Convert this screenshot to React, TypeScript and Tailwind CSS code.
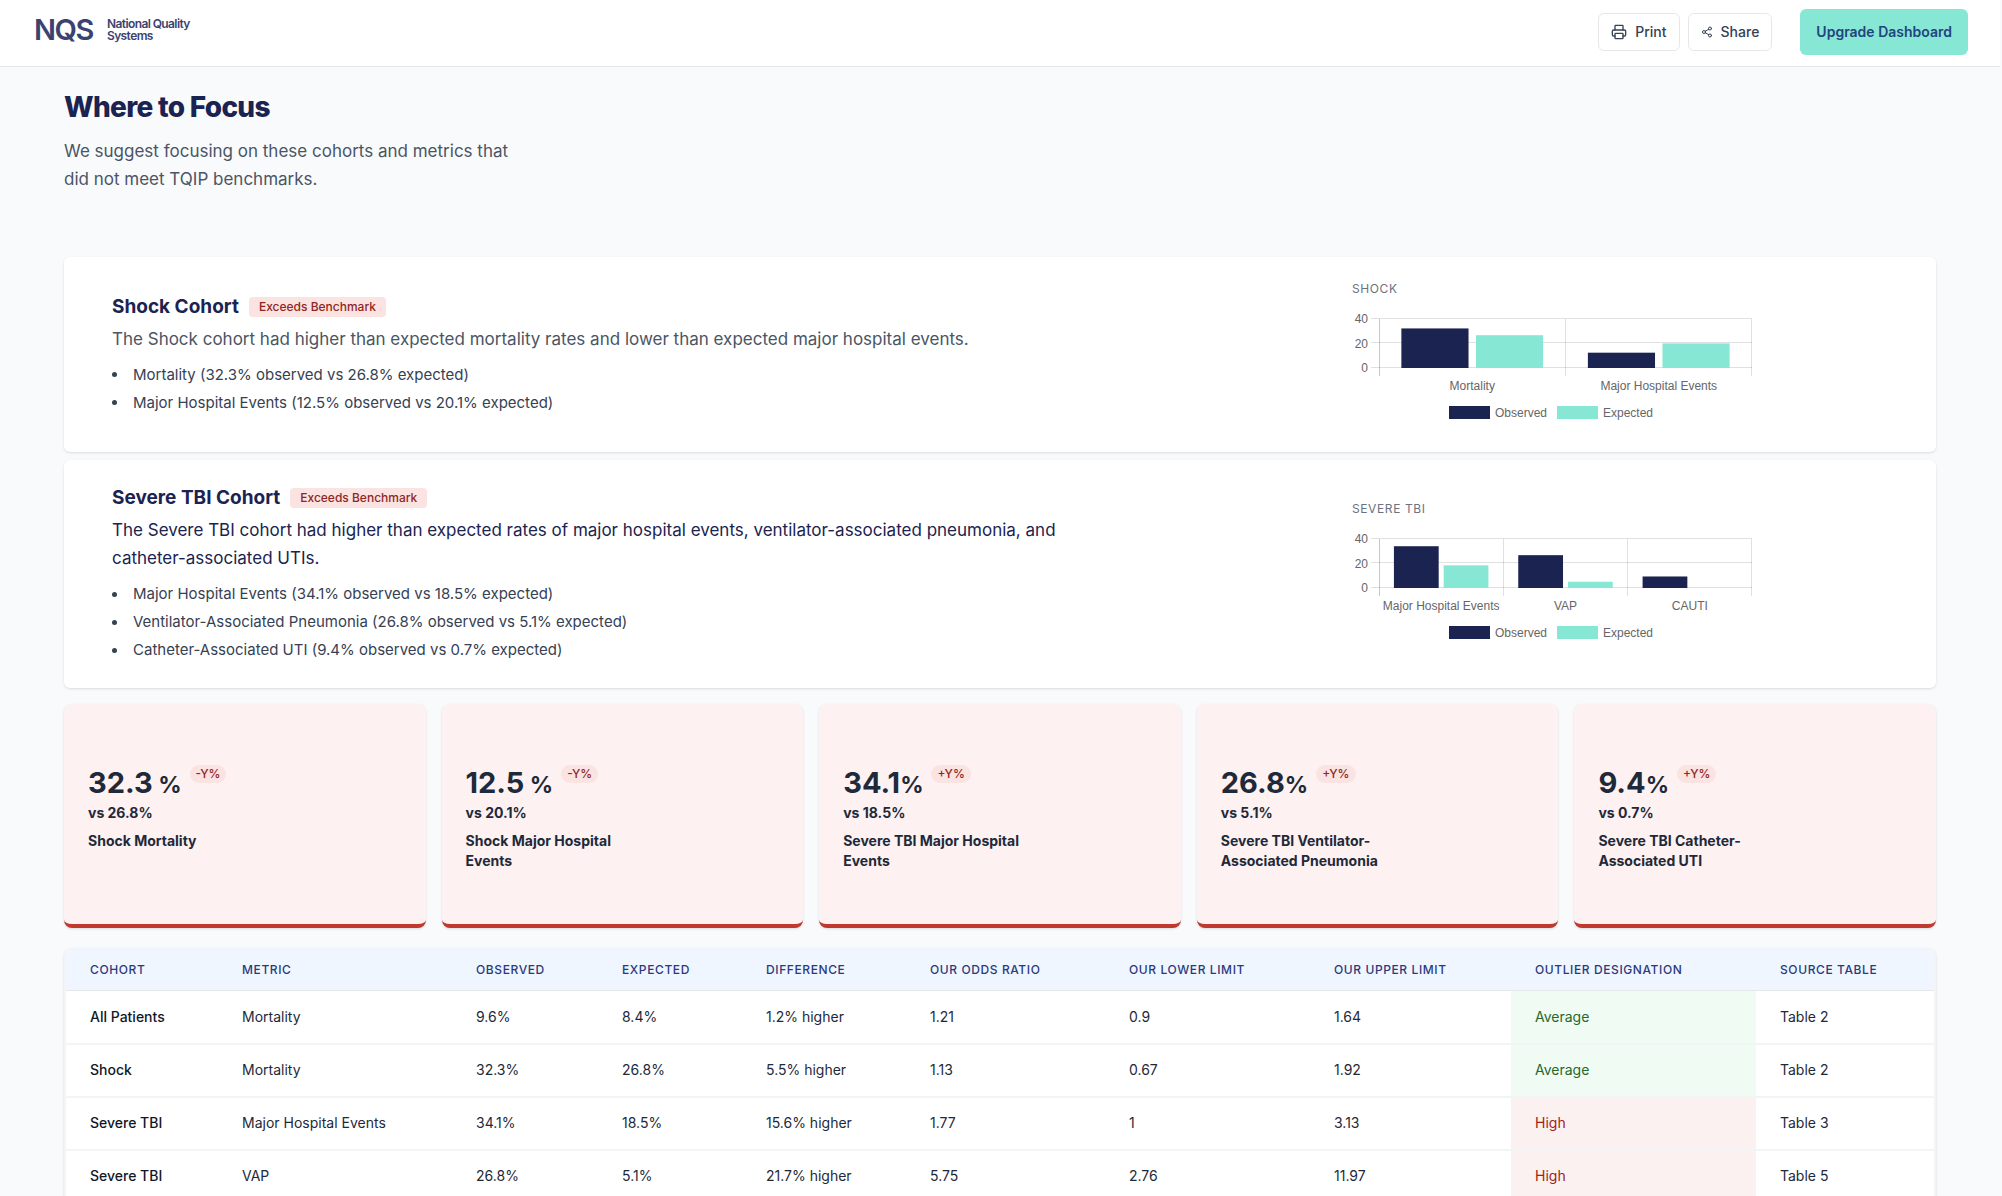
import React from 'react';
import { Printer, Share2 } from 'lucide-react';

interface ChartGroup {
  label: string;
  observed: number;
  expected: number;
}

interface CohortProps {
  title: string;
  summary: string;
  summaryClass: string;
  findings: string[];
  chartTitle: string;
  groups: ChartGroup[];
}

const cohorts: CohortProps[] = [
  {
    title: 'Shock Cohort',
    summary: 'The Shock cohort had higher than expected mortality rates and lower than expected major hospital events.',
    summaryClass: 'text-gray-600',
    findings: [
      'Mortality (32.3% observed vs 26.8% expected)',
      'Major Hospital Events (12.5% observed vs 20.1% expected)',
    ],
    chartTitle: 'Shock',
    groups: [
      { label: 'Mortality', observed: 32.3, expected: 26.8 },
      { label: 'Major Hospital Events', observed: 12.5, expected: 20.1 },
    ],
  },
  {
    title: 'Severe TBI Cohort',
    summary:
      'The Severe TBI cohort had higher than expected rates of major hospital events, ventilator-associated pneumonia, and catheter-associated UTIs.',
    summaryClass: 'text-[#1b2350]',
    findings: [
      'Major Hospital Events (34.1% observed vs 18.5% expected)',
      'Ventilator-Associated Pneumonia (26.8% observed vs 5.1% expected)',
      'Catheter-Associated UTI (9.4% observed vs 0.7% expected)',
    ],
    chartTitle: 'Severe TBI',
    groups: [
      { label: 'Major Hospital Events', observed: 34.1, expected: 18.5 },
      { label: 'VAP', observed: 26.8, expected: 5.1 },
      { label: 'CAUTI', observed: 9.4, expected: 0 },
    ],
  },
];

const metrics = [
  { value: '32.3', unit: ' %', badge: '-Y%', versus: 'vs 26.8%', label: 'Shock Mortality' },
  { value: '12.5', unit: ' %', badge: '-Y%', versus: 'vs 20.1%', label: 'Shock Major Hospital Events' },
  { value: '34.1', unit: '%', badge: '+Y%', versus: 'vs 18.5%', label: 'Severe TBI Major Hospital Events' },
  { value: '26.8', unit: '%', badge: '+Y%', versus: 'vs 5.1%', label: 'Severe TBI Ventilator-Associated Pneumonia' },
  { value: '9.4', unit: '%', badge: '+Y%', versus: 'vs 0.7%', label: 'Severe TBI Catheter-Associated UTI' },
];

const columns = [
  { name: 'Cohort', width: 'w-[152px]' },
  { name: 'Metric', width: 'w-[234px]' },
  { name: 'Observed', width: 'w-[146px]' },
  { name: 'Expected', width: 'w-[144px]' },
  { name: 'Difference', width: 'w-[164px]' },
  { name: 'Our Odds Ratio', width: 'w-[199px]' },
  { name: 'Our Lower Limit', width: 'w-[205px]' },
  { name: 'Our Upper Limit', width: 'w-[201px]' },
  { name: 'Outlier Designation', width: 'w-[245px]' },
  { name: 'Source Table', width: 'w-auto' },
];

const rows = [
  ['All Patients', 'Mortality', '9.6%', '8.4%', '1.2% higher', '1.21', '0.9', '1.64', 'Average', 'Table 2'],
  ['Shock', 'Mortality', '32.3%', '26.8%', '5.5% higher', '1.13', '0.67', '1.92', 'Average', 'Table 2'],
  ['Severe TBI', 'Major Hospital Events', '34.1%', '18.5%', '15.6% higher', '1.77', '1', '3.13', 'High', 'Table 3'],
  ['Severe TBI', 'VAP', '26.8%', '5.1%', '21.7% higher', '5.75', '2.76', '11.97', 'High', 'Table 5'],
];

const OBSERVED = '#1b2350';
const EXPECTED = '#86e8d4';

const BarChart: React.FC<{ groups: ChartGroup[] }> = ({ groups }) => {
  const left = 27;
  const right = 400;
  const top = 22;
  const base = 71;
  const slot = (right - left) / groups.length;
  const barSlot = (slot * 0.8) / 2;
  const barWidth = barSlot * 0.9;
  const y = (value: number) => base - (value / 40) * (base - top);

  return (
    <svg
      width="400"
      height="131"
      viewBox="0 0 400 131"
      role="img"
      aria-label="Observed and expected rates"
      fontFamily='"Liberation Sans", Arial, sans-serif'
      fontSize="12"
      fill="#666"
    >
      {[0, 20, 40].map((tick) => (
        <g key={tick}>
          <line x1={left - 8} x2={right} y1={Math.floor(y(tick)) - 0.5} y2={Math.floor(y(tick)) - 0.5} stroke="#000" strokeOpacity="0.12" />
          <text x={left - 11} y={y(tick) + 4} textAnchor="end">
            {tick}
          </text>
        </g>
      ))}
      {[...groups, null].map((_, i) => {
        const x = Math.min(Math.floor(left + slot * i) + 0.5, right - 0.5);
        return <line key={i} x1={x} x2={x} y1={top} y2={base + 8} stroke="#000" strokeOpacity={i === 0 ? 0.22 : 0.12} />;
      })}
      {groups.map((group, i) => {
        const start = left + slot * i + slot * 0.1 + barSlot * 0.05;
        return (
          <g key={group.label}>
            <rect x={start} y={y(group.observed)} width={barWidth} height={base - y(group.observed)} fill={OBSERVED} />
            <rect x={start + barSlot} y={y(group.expected)} width={barWidth} height={base - y(group.expected)} fill={EXPECTED} />
            <text x={left + slot * (i + 0.5)} y="93" textAnchor="middle">
              {group.label}
            </text>
          </g>
        );
      })}
      <rect x="97" y="109" width="41" height="13" fill={OBSERVED} />
      <text x="143" y="120">Observed</text>
      <rect x="205" y="109" width="41" height="13" fill={EXPECTED} />
      <text x="251" y="120">Expected</text>
    </svg>
  );
};

const CohortCard: React.FC<CohortProps> = ({ title, summary, summaryClass, findings, chartTitle, groups }) => (
  <section className="grid grid-cols-3 items-center rounded-md bg-white py-6 shadow">
    <div className="col-span-2 pl-12">
      <div className="flex items-center gap-2.5">
        <h2 className="text-[19px] font-bold leading-7 text-[#1b2350]">{title}</h2>
        <span className="rounded bg-[#fbe3e2] px-2.5 text-xs font-medium leading-5 text-[#8f2723]">Exceeds Benchmark</span>
      </div>
      <p className={`mt-1 max-w-[960px] text-[17px] leading-7 ${summaryClass}`}>{summary}</p>
      <ul className="mt-2 text-[15px] leading-7 text-gray-700">
        {findings.map((finding) => (
          <li key={finding} className="flex items-center gap-4">
            <span className="size-[5px] rounded-full bg-gray-700" />
            {finding}
          </li>
        ))}
      </ul>
    </div>
    <div className="pl-10">
      <h3 className="text-xs uppercase leading-4 tracking-wider text-gray-500">{chartTitle}</h3>
      <BarChart groups={groups} />
    </div>
  </section>
);

const cellClass = (index: number, value: string) => {
  if (index === 0) return 'font-medium text-gray-900';
  if (index !== 8) return 'text-gray-800';
  return value === 'High' ? 'bg-[#fcf1f1] text-[#a3211c]' : 'bg-[#f0fbf4] text-[#25692c]';
};

export default function App() {
  return (
    <div className="min-h-screen bg-[#f9fafc] pr-0.5 font-['Inter',sans-serif]">
      <header className="flex items-center justify-between border-b border-gray-200 bg-white pt-[9px] pb-[11px] pl-[34px] pr-8">
        <a href="#" className="mb-1 flex items-center gap-3.5 text-[#3c4270]">
          <span className="text-[29px] font-semibold leading-8 tracking-tighter">NQS</span>
          <span className="w-24 text-xs font-semibold leading-3 tracking-tighter">National Quality Systems</span>
        </a>
        <div className="flex items-center">
          <button className="flex h-[38px] items-center gap-2 rounded-md border border-gray-200 px-3 text-sm font-medium text-gray-700">
            <Printer className="size-4" />
            Print
          </button>
          <button className="ml-2 flex h-[38px] items-center gap-2 rounded-md border border-gray-200 px-3 text-sm font-medium text-gray-700">
            <Share2 className="size-3" />
            Share
          </button>
          <button className="ml-7 h-[46px] rounded-md bg-[#86e8d4] px-4 text-sm font-semibold text-[#23437f]">
            Upgrade Dashboard
          </button>
        </div>
      </header>

      <main className="px-16 pt-[22px]">
        <h1 className="text-[28px] font-extrabold leading-9 tracking-tight text-[#1b2350]">Where to Focus</h1>
        <p className="mt-3 max-w-md text-[17px] leading-7 text-gray-600">
          We suggest focusing on these cohorts and metrics that did not meet TQIP benchmarks.
        </p>

        <div className="mt-16 flex flex-col gap-2">
          {cohorts.map((cohort) => (
            <CohortCard key={cohort.title} {...cohort} />
          ))}
        </div>

        <div className="mt-4 grid grid-cols-5 gap-4">
          {metrics.map((metric) => (
            <div key={metric.label} className="h-56 rounded-lg border-b-4 border-[#c0392f] bg-[#fdf1f1] px-6 pt-[61px] text-gray-800 shadow">
              <div className="flex items-start gap-2">
                <p className="whitespace-pre text-[29px] font-bold leading-9">
                  {metric.value}
                  <span className="text-[23px]">{metric.unit}</span>
                </p>
                <span className="rounded-full bg-[#fbe3e2] px-1.5 text-xs font-medium leading-[18px] text-[#8f2723]">{metric.badge}</span>
              </div>
              <p className="text-sm font-bold leading-5">{metric.versus}</p>
              <p className="mt-2 max-w-48 text-sm font-bold leading-5">{metric.label}</p>
            </div>
          ))}
        </div>

        <div className="mt-5 overflow-hidden rounded-t-lg border-2 border-gray-100 bg-white shadow">
          <table className="w-full table-fixed text-left">
            <thead className="bg-[#eff6ff]">
              <tr className="border-b border-gray-200">
                {columns.map((column) => (
                  <th key={column.name} className={`whitespace-nowrap px-6 py-3 text-xs font-medium uppercase leading-4 tracking-wider text-[#2b3a7c] ${column.width}`}>
                    {column.name}
                  </th>
                ))}
              </tr>
            </thead>
            <tbody>
              {rows.map((row, rowIndex) => (
                <tr key={rowIndex} className="border-b-2 border-gray-100">
                  {row.map((value, index) => (
                    <td key={index} className={`h-[53px] px-6 text-sm leading-5 ${cellClass(index, value)}`}>
                      {value}
                    </td>
                  ))}
                </tr>
              ))}
            </tbody>
          </table>
        </div>
      </main>
    </div>
  );
}
